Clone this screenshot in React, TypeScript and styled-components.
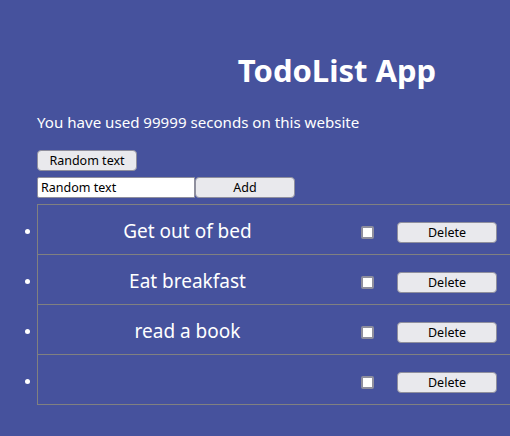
import React from "react";
import styled, { createGlobalStyle } from "styled-components";

const Global = createGlobalStyle`
  html, body {
    margin: 0;
    padding: 0;
    background: #46529d;
    overflow: hidden;
    font-family: "Noto Sans", "Open Sans", sans-serif;
    color: #ffffff;
  }
`;

const Page = styled.div`
  width: 600px;
  padding: 0 0 0 37px;
`;

const Title = styled.h1`
  margin: 48px 0 0;
  font-size: 31px;
  line-height: 44px;
  font-weight: 700;
  text-align: center;
`;

const Usage = styled.p`
  margin: 19px 0 0;
  font-size: 15.1px;
  line-height: 22px;
`;

const Button = styled.button<{ $w?: number }>`
  box-sizing: border-box;
  width: ${(p) => p.$w ?? 100}px;
  height: 21px;
  padding: 0;
  background: #e9e9ed;
  border: 1px solid #8f8f9d;
  border-radius: 4px;
  font-family: "Noto Sans", "Open Sans", sans-serif;
  font-size: 12.5px;
  line-height: 19px;
  color: #000000;
`;

const Controls = styled.div`
  margin-top: 15px;
  display: flex;
  flex-direction: column;
  gap: 6px;
`;

const AddRow = styled.div`
  display: flex;
`;

const TextInput = styled.input`
  box-sizing: border-box;
  width: 158px;
  height: 21px;
  margin: 0;
  padding: 0 3px;
  border: 1px solid #8f8f9d;
  border-radius: 2px 0 0 2px;
  background: #ffffff;
  font-family: "Noto Sans", "Open Sans", sans-serif;
  font-size: 12.5px;
  color: #000000;
  outline: none;
`;

const List = styled.ul`
  margin: 6px 0 0;
  padding: 0;
  list-style: none;
`;

const Item = styled.li<{ $last?: boolean }>`
  position: relative;
  border: 1px solid #808080;
  border-bottom: ${(p) => (p.$last ? "1px solid #808080" : "none")};

  &::before {
    content: "";
    position: absolute;
    left: -13px;
    top: 24px;
    width: 5px;
    height: 5px;
    border-radius: 50%;
    background: #ffffff;
  }
`;

const Row = styled.div`
  box-sizing: border-box;
  display: flex;
  align-items: center;
  height: 49px;
  padding-top: 6px;
`;

const ItemText = styled.span`
  width: 299px;
  text-align: center;
  font-size: 19px;
  line-height: 28px;
  margin-top: -4px;
`;

const CheckCell = styled.div`
  width: 60px;
  display: flex;
  justify-content: center;
`;

const Check = styled.input`
  appearance: none;
  box-sizing: border-box;
  width: 13px;
  height: 13px;
  margin: 0;
  background: #ffffff;
  border: 2px solid #8f8f9d;
  border-radius: 2px;
`;

const items = ["Get out of bed", "Eat breakfast", "read a book", ""];

export default function App() {
  return (
    <>
      <Global />
      <Page>
        <Title>TodoList App</Title>
        <Usage>You have used 99999 seconds on this website</Usage>
        <Controls>
          <div>
            <Button>Random text</Button>
          </div>
          <AddRow>
            <TextInput defaultValue="Random text" />
            <Button>Add</Button>
          </AddRow>
        </Controls>
        <List>
          {items.map((t, i) => (
            <Item key={i} $last={i === items.length - 1}>
              <Row>
                <ItemText>{t || "\u00a0"}</ItemText>
                <CheckCell>
                  <Check type="checkbox" />
                </CheckCell>
                <Button>Delete</Button>
              </Row>
            </Item>
          ))}
        </List>
      </Page>
    </>
  );
}
